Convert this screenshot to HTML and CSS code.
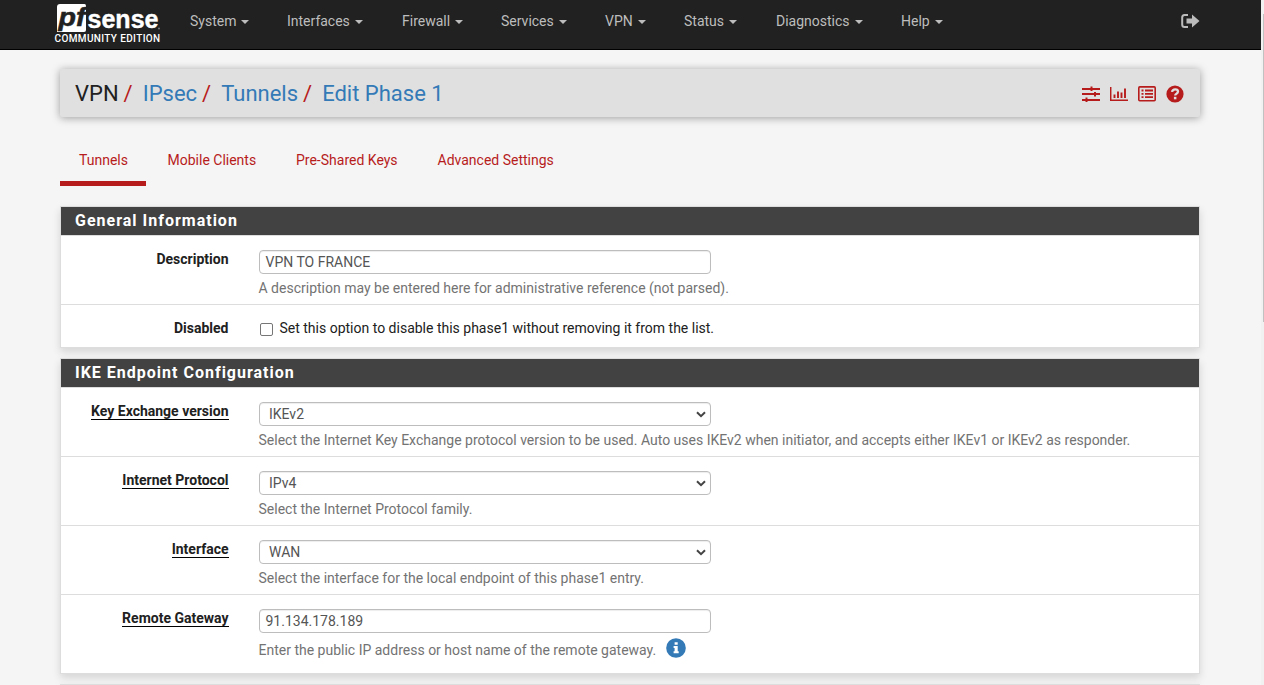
FILE: index.html
```html
<!DOCTYPE html>
<html lang="en">
<head>
<meta charset="utf-8">
<title>VPN: IPsec: Tunnels: Edit Phase 1</title>
<link rel="stylesheet" href="styles.css">
</head>
<body>
<div class="window">
<div class="page">
  <header class="topbar">
    <div class="brand">
      <svg class="mark" width="110" height="36" viewBox="0 0 110 36">
        <path class="mark-tile" d="M6 0H30.500Q32 0 32 2V26Q32 28 30 28H3V3Q3 0 6 0Z"/>
        <text class="mark-pf" x="4.500" y="22" textLength="27" lengthAdjust="spacingAndGlyphs">pf</text>
        <text class="mark-sense" x="33.500" y="23.500" textLength="71" lengthAdjust="spacingAndGlyphs">sense</text>
        <circle class="mark-dot" cx="105" cy="24.500" r="1"/>
      </svg>
      <span class="edition">COMMUNITY EDITION</span>
    </div>
    <nav class="menu">
      <a class="m1">System<i></i></a><a class="m2">Interfaces<i></i></a><a class="m3">Firewall<i></i></a><a class="m4">Services<i></i></a><a class="m5">VPN<i></i></a><a class="m6">Status<i></i></a><a class="m7">Diagnostics<i></i></a><a class="m8">Help<i></i></a>
    </nav>
    <svg class="logout" width="19" height="14" viewBox="0 0 19 14"><path d="M7 1H3.500Q1.200 1 1.200 3.500V10.500Q1.200 13 3.500 13H7" fill="none" stroke="#bbb" stroke-width="2"/><path d="M5.500 4.500H11V0.500L18.500 7L11 13.500V9.500H5.500Z" fill="#bbb"/></svg>
  </header>
  <main class="content">
    <div class="crumbs">
      <div class="trail"><span>VPN</span><b>/</b><a>IPsec</a><b>/</b><a>Tunnels</a><b>/</b><a>Edit Phase 1</a></div>
      <div class="tools">
        <svg width="18" height="16" viewBox="0 0 18 16"><path d="M0 3H18M0 8H18M0 14H18" stroke="#b71c1c" stroke-width="2"/><path d="M9.500 0.500V5M13 6V10.500M4.500 11.500V16" stroke="#b71c1c" stroke-width="2"/></svg>
        <svg width="18" height="16" viewBox="0 0 18 16"><path d="M0.700 1V14.300H18" fill="none" stroke="#b71c1c" stroke-width="1.500"/><path d="M4.500 8.500V12M8 5.500V12M11.500 6.500V12M15 2.500V12" stroke="#b71c1c" stroke-width="1.900"/></svg>
        <svg width="18" height="16" viewBox="0 0 18 16"><rect x="0.800" y="0.900" width="16.400" height="13.900" rx="1" fill="none" stroke="#b71c1c" stroke-width="1.600"/><path d="M3.500 4.500H5.500M3.500 7.800H5.500M3.500 11.200H5.500M7 4.500H15M7 7.800H15M7 11.200H15" stroke="#b71c1c" stroke-width="1.800"/></svg>
        <svg class="help" width="18" height="18" viewBox="0 0 18 18"><circle cx="9" cy="9" r="8.600" fill="#b71c1c"/><path d="M6 6.900Q6.500 4.300 9.200 4.300Q12 4.300 12 6.600Q12 7.900 10.500 8.700Q9.200 9.300 9.200 10.600" fill="none" stroke="#e0e0e0" stroke-width="2.300"/><rect x="7.900" y="11.800" width="2.500" height="2.500" fill="#e0e0e0"/></svg>
      </div>
    </div>
    <nav class="tabs"><a class="t1 active">Tunnels</a><a class="t2">Mobile Clients</a><a class="t3">Pre-Shared Keys</a><a class="t4">Advanced Settings</a></nav>

    <section class="panel">
      <h2>General Information</h2>
      <div class="row desc">
        <div class="label"><span>Description</span></div>
        <div class="field"><div class="control">VPN TO FRANCE</div><p>A description may be entered here for administrative reference (not parsed).</p></div>
      </div>
      <div class="row short">
        <div class="label"><span>Disabled</span></div>
        <div class="field check"><span class="box"></span><span class="t-check">Set this option to disable this phase1 without removing it from the list.</span></div>
      </div>
    </section>

    <section class="panel">
      <h2>IKE Endpoint Configuration</h2>
      <div class="row">
        <div class="label"><span class="req">Key Exchange version</span></div>
        <div class="field"><div class="control select">IKEv2<svg width="10" height="7" viewBox="0 0 10 7"><path d="M1 1.200L5 5.200L9 1.200"/></svg></div><p>Select the Internet Key Exchange protocol version to be used. Auto uses IKEv2 when initiator, and accepts either IKEv1 or IKEv2 as responder.</p></div>
      </div>
      <div class="row">
        <div class="label"><span class="req">Internet Protocol</span></div>
        <div class="field"><div class="control select">IPv4<svg width="10" height="7" viewBox="0 0 10 7"><path d="M1 1.200L5 5.200L9 1.200"/></svg></div><p>Select the Internet Protocol family.</p></div>
      </div>
      <div class="row">
        <div class="label"><span class="req">Interface</span></div>
        <div class="field"><div class="control select">WAN<svg width="10" height="7" viewBox="0 0 10 7"><path d="M1 1.200L5 5.200L9 1.200"/></svg></div><p>Select the interface for the local endpoint of this phase1 entry.</p></div>
      </div>
      <div class="row last">
        <div class="label"><span class="req">Remote Gateway</span></div>
        <div class="field"><div class="control">91.134.178.189</div><p class="with-info"><span>Enter the public IP address or host name of the remote gateway.</span><svg width="20" height="20" viewBox="0 0 20 20"><circle cx="10" cy="10" r="9.800" fill="#337ab7"/><path d="M8.600 4.200H11.700V6.800H8.600ZM7.600 8H11.700V13.200H12.700V15.200H7.600V13.200H8.600V10H7.600Z" fill="#fff"/></svg></p></div>
      </div>
    </section>
    <section class="panel next"></section>
  </main>
</div>
<div class="scroll"><div class="thumb"></div></div>
</div>
</body>
</html>
```
FILE: styles.css
```css
* { box-sizing: border-box; }
body { margin: 0; background: #f5f5f5; font: 14px/19px Roboto, sans-serif; color: #212121; }
.window { display: flex; height: 685px; overflow: hidden; }
.page { width: 1261px; }
.scroll { width: 3px; background: #f1f1f1; padding: 14px 0 0 2px; }
.thumb { height: 308px; background: #c1c1c1; }

.topbar { display: flex; height: 50px; padding-left: 54px; background: #212121; border-bottom: 1px solid #000; }
.brand { width: 136px; padding-top: 4px; }
.mark { display: block; overflow: visible; }
.mark-tile { fill: #fff; }
.mark-pf { font: italic bold 25px "Liberation Sans", sans-serif; fill: #212121; stroke: #212121; stroke-width: .5px; }
.mark-sense { font: bold 26px "Liberation Sans", sans-serif; fill: #fff; stroke: #fff; stroke-width: .4px; }
.mark-dot { fill: #777; }
.edition { display: block; margin: -7px 0 0 0.5px; font-size: 10px; line-height: 12px; font-weight: 500; letter-spacing: 0.37px; color: #fff; white-space: nowrap; }
.menu { display: flex; padding-top: 12px; width: 990px; }
.menu a { color: #bdbdbd; white-space: nowrap; }
.menu i { display: inline-block; margin-left: 5px; vertical-align: 2px; border: 4px solid transparent; border-top-color: #bdbdbd; border-bottom: 0; }
.m1 { width: 97px; } .m2 { width: 115px; } .m3 { width: 99px; } .m4 { width: 104px; }
.m5 { width: 79px; } .m6 { width: 92px; } .m7 { width: 125px; }
.logout { margin: 14px 0 0 1px; }

.content { padding: 19px 61px 0 60px; }
.crumbs { display: flex; justify-content: space-between; height: 48px; padding: 0 16px 0 15px; background: #e0e0e0; border-radius: 2px; box-shadow: 0 1px 8px rgba(0,0,0,.36); }
.trail { display: flex; font-size: 22px; line-height: 50px; white-space: nowrap; }
.trail b { margin: 0 10px 0 5px; color: #b71c1c; font-weight: 400; }
.trail a { color: #337ab7; }
.tools { display: flex; gap: 10px; padding-top: 17px; }
.help { margin-top: -1px; }
.tabs { display: flex; height: 49px; margin: 20px 0; color: #b71c1c; line-height: 47px; white-space: nowrap; }
.t1 { width: 86px; padding-left: 19px; } .t2 { width: 129px; padding-left: 21.500px; } .t3 { width: 141px; padding-left: 21px; } .t4 { padding-left: 21.500px; }
.active { border-bottom: 5px solid #b71c1c; }

.panel { margin-bottom: 10px; background: #fff; border: 1px solid #ddd; box-shadow: 0 4px 8px rgba(0,0,0,.13); }
.panel h2 { margin: 0; height: 29px; padding-left: 14px; background: #424242; border-bottom: 1px solid #ddd; color: #fff; font-size: 16px; line-height: 28px; letter-spacing: 1px; }
.row { display: flex; height: 69px; padding-top: 14px; border-top: 1px solid #ddd; }
.panel h2 + .row { border-top: 0; height: 68px; }
.panel .short { height: 43px; }
.panel .last { height: 79px; }
.label { width: 167.5px; text-align: right; font-weight: 700; }
.req { display: inline-block; line-height: 15px; padding-top: 1px; border-bottom: 1px solid #000; }
.field { margin-left: 30px; white-space: nowrap; }
.control { width: 452px; height: 24px; padding: 0 6px; border: 1px solid #bdbdbd; border-radius: 4px; box-shadow: inset 0 1px 1px rgba(0,0,0,.075); line-height: 22px; color: #555; }
.select { display: flex; justify-content: space-between; align-items: center; padding: 0 4px 0 9.5px; }
.select path { fill: none; stroke: #444; stroke-width: 2; }
.field p { margin: 5px 0 0; color: #737373; }
.with-info { display: flex; align-items: center; gap: 10px; }
.with-info span { padding-top: 3px; }
.with-info svg { margin-top: -3px; }
.check { display: flex; }
.box { width: 13px; height: 13px; margin: 4px 6.5px 0 1.5px; border: 1px solid #767676; border-radius: 2px; }
.next { height: 40px; }
```
